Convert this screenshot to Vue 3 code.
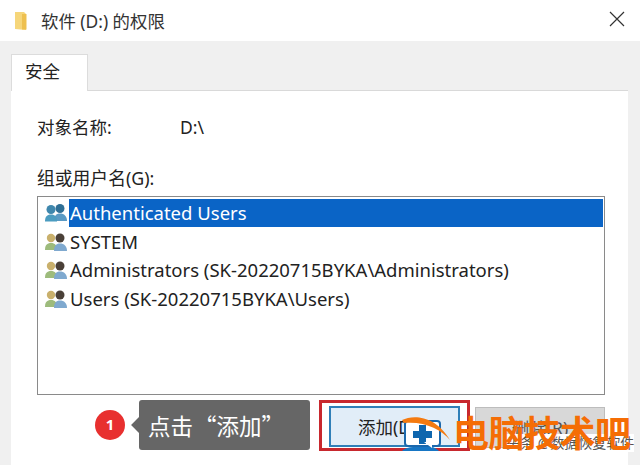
<template>
  <div class="window">
    <header class="titlebar">
      <svg class="folder" width="16" height="22" viewBox="0 0 16 22">
        <path d="M1 2h9l2 2v16l-11-1z" fill="#f6d67a"/>
        <path d="M8 4h4.500v15.500H8z" fill="#eec04f"/>
      </svg>
      <span class="title">软件 (D:) 的权限</span>
      <svg class="close" width="16" height="16" viewBox="0 0 16 16">
        <path d="M1 1l14 14M15 1L1 15" stroke="#333" stroke-width="1.200" fill="none"/>
      </svg>
    </header>
    <div class="body">
      <div class="tabs"><div class="tab">安全</div></div>
      <section class="page">
        <div class="object">
          <span class="label">对象名称:</span>
          <span class="path">D:\</span>
        </div>
        <div class="group-label">组或用户名(G):</div>
        <ul class="list">
          <li v-for="(row, i) in rows" :key="row" class="row">
            <svg class="users" width="24" height="20" viewBox="0 0 24 20">
              <template v-if="i === 0">
                <circle cx="16" cy="5.500" r="4.500" fill="#2f6f96"/>
                <path d="M10 18c0-5 2-7.500 6-7.500s7 2.500 7 7.500z" fill="#5a9ac4"/>
                <circle cx="7" cy="6.500" r="4.500" fill="#3f87ad"/>
                <path d="M1 18.500c0-5 2-7 6-7s6 2 6 7z" fill="#4b9cc0"/>
              </template>
              <template v-else>
                <circle cx="7" cy="6" r="4.200" fill="#c9b06c"/>
                <path d="M1 18c0-5 2-7 6-7s6 2 6 7z" fill="#9dbb7c"/>
                <circle cx="16" cy="6" r="4.500" fill="#4a4038"/>
                <path d="M10 19c0-5 2-7.500 6-7.500s7 2.500 7 7.500z" fill="#7fa9cf"/>
              </template>
            </svg>
            <span class="name" :class="{ selected: i === 0 }">{{ row }}</span>
          </li>
        </ul>
        <div class="actions">
          <div class="callout-wrap">
            <span class="badge">1</span>
            <span class="callout">点击 “添加”</span>
          </div>
          <div class="highlight"><button class="btn primary">添加(D)...</button></div>
          <button class="btn disabled">删除(R)</button>
        </div>
      </section>
      <div class="ghost">头条 @数据恢复软件</div>
      <div class="watermark">
        <svg class="wm-logo" width="50" height="36" viewBox="0 0 50 36">
          <rect x="3" y="5" width="35" height="25" rx="3" fill="#fff" stroke="#1a68ad" stroke-width="2"/>
          <path d="M17 9h7v6h6v7h-6v6h-7v-6h-6v-7h6z" fill="#0e66ae"/>
          <path d="M0 35c3-3 7-4 11-4h18c3 0 6 2 8 4z" fill="#1776c4"/>
          <path d="M22 26h8v6z" fill="#fff"/>
          <path d="M0 4c12-6 34-4 48 20-9-11-26-19-46-17z" fill="#f47a10"/>
        </svg>
        <span class="wm-text">电脑技术吧</span>
      </div>
    </div>
  </div>
</template>

<script setup>
const rows = [
  'Authenticated Users',
  'SYSTEM',
  'Administrators (SK-20220715BYKA\\Administrators)',
  'Users (SK-20220715BYKA\\Users)'
]
</script>

<style>
html, body { margin: 0; overflow: hidden; background: #f0f0f0; }
</style>

<style scoped>
.window {
  width: 640px;
  height: 465px;
  overflow: hidden;
  display: flex;
  flex-direction: column;
  font-family: "Noto Sans", "Noto Sans CJK SC", sans-serif;
  color: #222;
  background: #f0f0f0;
}
.titlebar {
  height: 41px;
  flex: none;
  background: #fff;
  display: flex;
  align-items: center;
  padding: 0 15px 0 14px;
  box-sizing: border-box;
}
.folder { flex: none; margin-right: 11px; }
.title { font-size: 17.400px; flex: 1; white-space: nowrap; color: #333; }
.close { flex: none; margin-top: -4px; }
.body {
  flex: 1;
  position: relative;
  padding: 13px 12px 0 11px;
  display: flex;
  flex-direction: column;
}
.tabs { height: 36px; flex: none; display: flex; position: relative; z-index: 1; }
.tab {
  width: 77px;
  height: 37px;
  box-sizing: border-box;
  background: #fff;
  border: 1px solid #dcdcdc;
  border-bottom: 0;
  font-size: 17.500px;
  line-height: 33px;
  padding-left: 13px;
}
.page {
  flex: 1;
  background: #fff;
  border-top: 1px solid #d9d9d9;
  padding: 21px 23px 0 26px;
  min-height: 0;
}
.object { display: flex; font-size: 17.500px; line-height: 30px; }
.label { width: 143px; }
.group-label { font-size: 17.800px; line-height: 24px; margin-top: 24px; }
.list {
  list-style: none;
  margin: 6px 0 0;
  padding: 2px 1px 0 6px;
  height: 199px;
  box-sizing: border-box;
  border: 1px solid #8a8a8a;
}
.row { height: 28.500px; display: flex; align-items: center; }
.users { flex: none; margin-right: 1px; }
.name { font-size: 18.500px; line-height: 28px; flex: 1; padding-left: 1px; white-space: nowrap; }
.selected { background: #0a64c6; color: #fff; }
.actions { display: flex; align-items: flex-start; margin-top: 5px; }
.callout-wrap {
  width: 224px;
  margin-left: 58px;
  flex: none;
  display: flex;
  align-items: center;
  height: 50px;
}
.badge {
  width: 30px;
  height: 30px;
  border-radius: 50%;
  background: #e8302f;
  color: #fff;
  font-size: 15px;
  font-weight: 700;
  text-align: center;
  line-height: 28px;
  flex: none;
  margin-right: 14px;
}
.callout {
  position: relative;
  width: 171px;
  height: 50px;
  flex: none;
  background: #666;
  border-radius: 3px;
  color: #fff;
  font-family: "Noto Sans CJK SC", sans-serif;
  font-size: 22.500px;
  line-height: 50px;
  padding-left: 9px;
  box-sizing: border-box;
  white-space: nowrap;
  word-spacing: -4px;
}
.callout::before {
  content: "";
  position: absolute;
  left: -7px;
  top: 18px;
  width: 14px;
  height: 14px;
  background: #666;
  transform: rotate(45deg) scale(.8);
}
.highlight {
  flex: none;
  width: 151px;
  height: 51px;
  box-sizing: border-box;
  border: 3px solid #c8282e;
  padding: 3px 7px;
}
.btn {
  display: block;
  width: 131px;
  height: 41px;
  box-sizing: border-box;
  font: 17.500px "Noto Sans", "Noto Sans CJK SC", sans-serif;
  color: #222;
  padding: 0;
}
.primary { background: #e1edf8; border: 2px solid #2f7fb8; text-align: left; padding-left: 27px; }
.disabled { background: #d8d8d8; border: 1px solid #bdbdbd; margin: 7px 0 0 5px; color: #555; }
.ghost {
  position: absolute;
  left: 506px;
  top: 393px;
  font-size: 14px;
  line-height: 18px;
  color: #555;
  white-space: nowrap;
  background: #fff;
}
.watermark {
  position: absolute;
  left: 402px;
  top: 375px;
  display: flex;
  align-items: center;
  pointer-events: none;
}
.wm-logo { flex: none; margin-right: 1px; }
.wm-text {
  font-size: 36px;
  line-height: 36px;
  font-weight: 700;
  letter-spacing: -.5px;
  color: #f56d05;
  white-space: nowrap;
}
</style>
